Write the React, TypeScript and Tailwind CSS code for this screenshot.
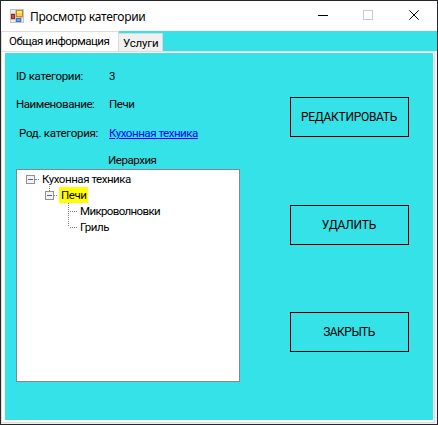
import React from "react";

function Expander() {
  return (
    <svg width="9" height="9" viewBox="0 0 9 9" shapeRendering="crispEdges">
      <rect x="0.5" y="0.5" width="8" height="8" fill="#f3f3f3" stroke="#919191" />
      <path d="M2 4.5h5" stroke="#4b63a7" />
    </svg>
  );
}

function FormIcon() {
  return (
    <svg width="14" height="14" viewBox="0 0 14 14">
      <rect width="14" height="14" fill="#c4c4c4" />
      <path d="M1 1h4v3H1zM1 11h4v2H1zM12 9h1v4h-1z" fill="#ececec" />
      <rect x="6.5" y="1.5" width="6" height="6" fill="#f8cf4a" stroke="#c98a10" />
      <path d="M7 2h5v2H7z" fill="#ffe694" />
      <rect x="1.5" y="5.5" width="3" height="4" fill="#cf5246" stroke="#9c231b" />
      <rect x="6.5" y="9.5" width="4" height="3" fill="#6da2ee" stroke="#3c72cc" />
    </svg>
  );
}

function ActionButton({ label, spacing }: { label: string; spacing: string }) {
  return (
    <button className="flex h-10 w-[119px] items-center justify-center border border-black pr-px text-[12px] leading-4">
      <span className={spacing}>{label}</span>
    </button>
  );
}

export default function App() {
  return (
    <div className="flex h-[425px] w-[438px] flex-col overflow-hidden border border-[#26262b] bg-white font-['Roboto','Liberation_Sans',sans-serif] text-[11.5px] leading-4 whitespace-nowrap text-black">
      <header className="flex h-[30px] shrink-0 items-center bg-white">
        <div className="flex w-[29px] pl-[9px]"><FormIcon /></div>
        <h1 className="grow pt-px font-['Noto_Sans','Open_Sans',sans-serif] text-[12px] leading-4 tracking-[-0.28px]">Просмотр категории</h1>
        <svg width="138" height="30" viewBox="299 1 138 30" shapeRendering="crispEdges" fill="none">
          <path d="M318 15.5h10" stroke="#000" />
          <rect x="363.5" y="10.5" width="9" height="9" stroke="#ccc" />
          <path d="M409.3 10.3l9.4 9.4M418.7 10.3l-9.4 9.4" stroke="#000" shapeRendering="auto" />
        </svg>
      </header>
      <div className="flex h-5 shrink-0 bg-[#35e2e7]">
        <div className="w-[118px] border-t border-r border-l border-[#dcdcdc] bg-white pt-px pl-[7px]">
          <span className="tracking-[-0.5px]">Общая информация</span>
        </div>
        <div className="mt-[2px] w-11 border-t border-r border-[#d9d9d9] bg-[#f0f0f0] pt-px pl-1">
          <span className="tracking-[-0.15px]">Услуги</span>
        </div>
      </div>
      <main className="flex grow border-r-2 border-b border-[#f0f0f0]">
        <div className="flex grow border border-[#dcdcdc] bg-white pt-px pr-px pb-[2px] pl-[3px]">
          <div className="flex grow bg-[#35e2e7]">
            <section className="ml-[11px] w-[224px] pt-[15px] tracking-[-0.45px]">
              <div className="flex h-7"><span className="w-[93px] tracking-[-0.3px]">ID категории:</span><span>3</span></div>
              <div className="flex h-[29px]"><span className="w-[93px] tracking-[-0.42px]">Наименование:</span><span>Печи</span></div>
              <div className="flex h-[27px]"><span className="w-[93px] pl-[3px] tracking-[-0.27px]">Род. категория:</span><a className="text-[#0000ff] underline">Кухонная техника</a></div>
              <div className="h-[17px] pl-[92px]">Иерархия</div>
              <div className="h-[213px] border border-[#828790] bg-white pt-px">
                <div className="flex h-4 items-center pl-[9px]"><Expander /><span className="mr-[3px] w-1 border-t border-dotted border-[#808080]" /><span>Кухонная техника</span></div>
                <div className="relative flex h-4 items-center pl-7">
                  <span className="absolute -top-[3px] left-8 h-[7px] border-l border-dotted border-[#808080]" />
                  <Expander /><span className="mr-[2px] w-[3px] border-t border-dotted border-[#808080]" /><span className="h-4 w-[29px] bg-[#ffff00] pl-[2px]">Печи</span>
                </div>
                <div className="flex pl-[51px]">
                  <svg width="12" height="32" shapeRendering="crispEdges" fill="none" stroke="#808080" strokeDasharray="1 1"><path d="M.5 0v24M2 8.5h8M2 24.5h8" /></svg>
                  <div><div className="h-4 tracking-[-0.63px]">Микроволновки</div><div className="h-4">Гриль</div></div>
                </div>
              </div>
            </section>
            <nav className="flex flex-col pt-11 pl-[50px]">
              <ActionButton label="РЕДАКТИРОВАТЬ" spacing="tracking-[-0.3px]" />
              <div className="h-[68px]" />
              <ActionButton label="УДАЛИТЬ" spacing="tracking-[-0.2px]" />
              <div className="h-[67px]" />
              <ActionButton label="ЗАКРЫТЬ" spacing="tracking-[-0.5px]" />
            </nav>
          </div>
        </div>
      </main>
    </div>
  );
}
